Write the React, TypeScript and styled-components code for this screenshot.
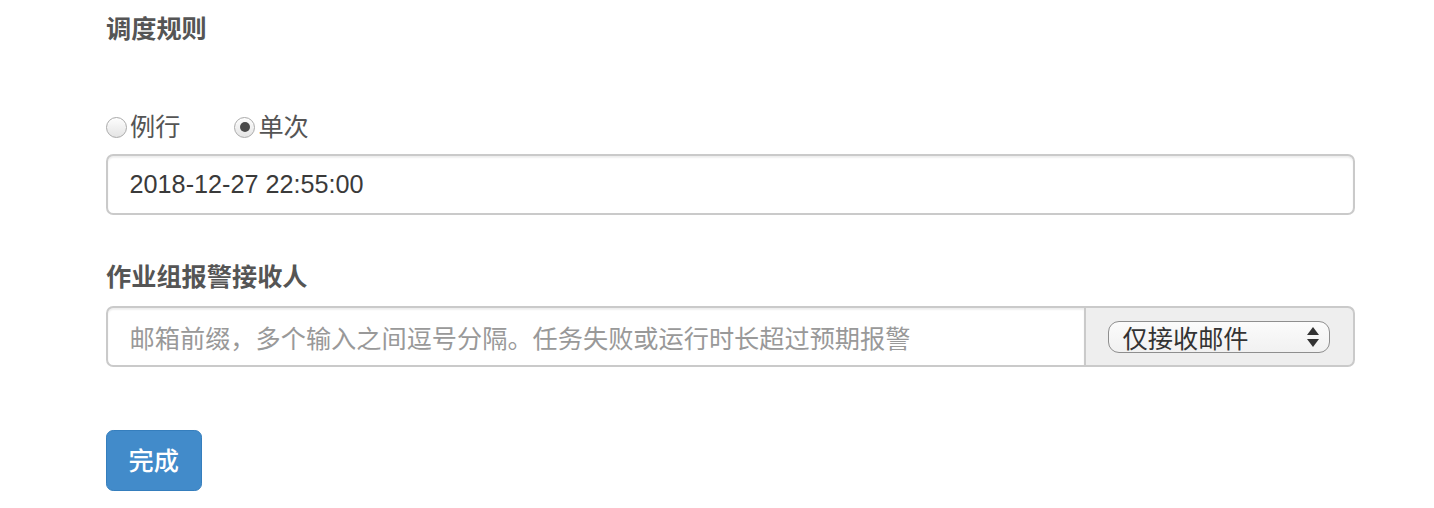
import React from "react";
import styled, { createGlobalStyle } from "styled-components";

const GlobalStyle = createGlobalStyle`
  html, body { margin: 0; padding: 0; background: #fff; }
  body {
    font-family: "Liberation Sans", "Noto Sans CJK SC", sans-serif;
    color: #333;
  }
  * { box-sizing: border-box; }
`;

const Page = styled.div`
  width: 1249px;
  margin-left: 106px;
  padding-top: 11px;
  display: flex;
  flex-direction: column;
`;

const Label = styled.div<{ $mt?: number }>`
  font-size: 25.2px;
  line-height: 36px;
  font-weight: bold;
  color: #555;
  margin-top: ${(p) => p.$mt ?? 0}px;
`;

const RadioRow = styled.div`
  display: flex;
  align-items: center;
  height: 36px;
  margin-top: 62px;
  gap: 54px;
`;

const RadioItem = styled.label`
  display: flex;
  align-items: center;
  gap: 3px;
  font-size: 25.2px;
  line-height: 36px;
  color: #555;
  cursor: pointer;
`;

const RadioDot = styled.span<{ $checked?: boolean }>`
  position: relative;
  width: 21px;
  height: 21px;
  border-radius: 50%;
  border: 1.5px solid #a9a9a9;
  background: linear-gradient(#fdfdfd, #e4e4e4);
  box-shadow: inset 0 1px 1px rgba(255, 255, 255, 0.8);
  flex: none;
  &::after {
    content: "";
    display: ${(p) => (p.$checked ? "block" : "none")};
    position: absolute;
    left: 50%;
    top: 50%;
    width: 10px;
    height: 10px;
    margin: -5px 0 0 -5px;
    border-radius: 50%;
    background: #4a4a4a;
  }
`;

const TextInput = styled.div<{ $mt?: number; $grouped?: boolean }>`
  flex: ${(p) => (p.$grouped ? "1 1 auto" : "none")};
  height: 61px;
  margin-top: ${(p) => p.$mt ?? 0}px;
  padding: 0 21.6px;
  display: flex;
  align-items: center;
  border: 2px solid #cacaca;
  border-radius: ${(p) => (p.$grouped ? "7.2px 0 0 7.2px" : "7.2px")};
  box-shadow: inset 0 1.8px 1.8px rgba(0, 0, 0, 0.075);
  font-size: 25.2px;
  color: #3a3a3a;
  background: #fff;
`;

const Placeholder = styled.span`
  color: #999;
`;

const InputGroup = styled.div`
  display: flex;
  margin-top: 11px;
  height: 61px;
`;

const Addon = styled.div`
  flex: none;
  width: 269px;
  height: 61px;
  padding: 0 21.6px;
  display: flex;
  align-items: center;
  background: #eee;
  border: 2px solid #cacaca;
  border-left: 0;
  border-radius: 0 7.2px 7.2px 0;
`;

const Select = styled.div`
  width: 222px;
  height: 32px;
  border: 1.6px solid #8e8e8e;
  border-radius: 11px;
  background: linear-gradient(#fbfbfb, #f1f1f1);
  display: flex;
  align-items: center;
  justify-content: space-between;
  padding: 0 9px 0 14px;
  font-size: 25.2px;
  color: #333;
`;

const Button = styled.button`
  align-self: flex-start;
  margin-top: 63px;
  height: 61px;
  padding: 0 21.6px;
  border: 1.8px solid #357ebd;
  border-radius: 7.2px;
  background: #428bca;
  color: #fff;
  font-family: inherit;
  font-size: 25.2px;
  line-height: 36px;
  font-weight: 500;
`;

export default function App() {
  return (
    <>
      <GlobalStyle />
      <Page>
        <Label>调度规则</Label>
        <RadioRow>
          <RadioItem>
            <RadioDot />
            例行
          </RadioItem>
          <RadioItem>
            <RadioDot $checked />
            单次
          </RadioItem>
        </RadioRow>
        <TextInput $mt={9}>2018-12-27 22:55:00</TextInput>
        <Label $mt={44}>作业组报警接收人</Label>
        <InputGroup>
          <TextInput $grouped>
            <Placeholder>邮箱前缀，多个输入之间逗号分隔。任务失败或运行时长超过预期报警</Placeholder>
          </TextInput>
          <Addon>
            <Select>
              <span>仅接收邮件</span>
              <svg width="14" height="22" viewBox="0 0 14 22">
                <path d="M7 1 L13 9 L1 9 Z" fill="#333" />
                <path d="M7 21 L13 13 L1 13 Z" fill="#333" />
              </svg>
            </Select>
          </Addon>
        </InputGroup>
        <Button>完成</Button>
      </Page>
    </>
  );
}
